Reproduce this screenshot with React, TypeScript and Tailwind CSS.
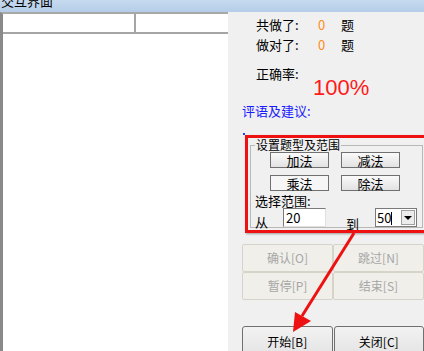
const font = { fontFamily: '"SimSun", "Noto Sans CJK SC", "Liberation Sans", sans-serif' };

function WinButton({ label, pressed }: { label: string; pressed?: boolean }) {
  return (
    <div
      className={`flex h-[16px] w-[59px] shrink-0 items-center justify-center border border-[#707070] text-[13px] leading-none text-black ${
        pressed ? 'bg-[#f6f6f6]' : 'bg-gradient-to-b from-[#fafafa] to-[#e2e2e2]'
      }`}
    >
      {label}
    </div>
  );
}

function DisabledButton({ label }: { label: string }) {
  return (
    <div className="flex h-[28px] items-center justify-center rounded-[2px] border border-[#d6d3c8] bg-[#f0efea] text-[12px] text-[#a6a6a6]">
      {label}
    </div>
  );
}

export default function App() {
  return (
    <div className="relative flex h-[351px] w-[424px] flex-col overflow-hidden bg-[#f0f0f0]" style={font}>
      {/* title bar */}
      <div className="h-[12px] shrink-0 overflow-hidden bg-gradient-to-b from-[#c6daef] to-[#b4cde8]">
        <div className="-mt-[7px] pl-[1px] text-[13px] leading-[15px] text-black">交互界面</div>
      </div>

      <div className="flex flex-1">
        {/* list view */}
        <div className="flex w-[228px] shrink-0 flex-col border-l-[3px] border-t-[2px] border-l-[#8a8a8a] border-t-[#a8a8a8] bg-white">
          <div className="flex h-[20px] border-b-[2px] border-[#a5a5a5]">
            <div className="w-[133px] border-r-[2px] border-[#a5a5a5]" />
            <div className="flex-1" />
          </div>
        </div>

        {/* right panel */}
        <div className="flex min-w-0 flex-1 flex-col text-[13px] text-black">
          <div className="ml-[28px] mt-[5px] flex flex-col gap-[6px]">
            <div className="flex h-[14px] items-center leading-none">
              <span className="w-[62px]">共做了:</span>
              <span className="w-[23px] text-[#ff8c1a]">0</span>
              <span>题</span>
            </div>
            <div className="flex h-[14px] items-center leading-none">
              <span className="w-[62px]">做对了:</span>
              <span className="w-[23px] text-[#ff8c1a]">0</span>
              <span>题</span>
            </div>
          </div>
          <div className="ml-[28px] mt-[16px] h-[14px] leading-none">正确率:</div>
          <div className="ml-[85px] mt-[-4px] h-[22px] text-[22px] leading-none text-[#ff1a1a]" style={{ fontFamily: '"Liberation Sans", sans-serif' }}>
            100%
          </div>
          <div className="ml-[14px] mt-[5px] h-[14px] leading-none text-[#1a1aff]">评语及建议:</div>

          {/* group box */}
          <div className="relative ml-[22px] mr-[1px] mt-[27px] h-[83px] border border-[#b8b8b8] px-[4px] pt-[6px]">
            <span className="absolute -top-[7px] left-[4px] bg-[#f0f0f0] px-[1px] text-[12px] leading-[12px]">设置题型及范围</span>
            <div className="ml-[15px] flex gap-[12px]">
              <WinButton label="加法" />
              <WinButton label="减法" />
            </div>
            <div className="ml-[15px] mt-[7px] flex gap-[12px]">
              <WinButton label="乘法" pressed />
              <WinButton label="除法" />
            </div>
            <div className="mt-[3px] h-[14px] leading-[14px]">选择范围:</div>
            <div className="flex items-end">
              <span className="mb-[-2px] w-[28px] shrink-0 leading-[14px]">从</span>
              <div className="mt-[-6px] h-[19px] w-[43px] shrink-0 border border-[#7a7a7a] border-b-[#e0e0e0] border-r-[#e0e0e0] bg-white pl-[2px] text-[13px] leading-[17px]">
                20
              </div>
              <span className="mb-[-4px] ml-[20px] w-[29px] shrink-0 leading-[14px]">到</span>
              <div className="flex h-[19px] w-[42px] shrink-0 border border-[#7a7a7a] bg-white">
                <div className="flex-1 pl-[1px] leading-[17px]">
                  50<span className="inline-block h-[13px] w-[1px] translate-y-[2px] bg-black" />
                </div>
                <div className="m-[1px] flex w-[14px] items-center justify-center border border-[#a0a0a0] bg-[#ececec]">
                  <div className="h-0 w-0 border-l-[4px] border-r-[4px] border-t-[4px] border-l-transparent border-r-transparent border-t-black" />
                </div>
              </div>
            </div>
          </div>

          <div className="ml-[14px] mt-[16px] grid grid-cols-2" style={{ fontFamily: '"Noto Sans CJK SC", sans-serif' }}>
            <DisabledButton label="确认[O]" />
            <DisabledButton label="跳过[N]" />
            <DisabledButton label="暂停[P]" />
            <DisabledButton label="结束[S]" />
          </div>

          <div className="ml-[14px] mt-[26px] grid grid-cols-2 gap-[1px]">
            <div className="flex h-[30px] items-start justify-center rounded-[3px] border border-[#707070] bg-gradient-to-b from-[#f2f2f2] to-[#e4e4e4] pt-[9px] text-[12px] leading-none">
              开始[B]
            </div>
            <div className="flex h-[30px] items-start justify-center rounded-[3px] border border-[#707070] bg-gradient-to-b from-[#f2f2f2] to-[#e4e4e4] pt-[9px] text-[12px] leading-none">
              关闭[C]
            </div>
          </div>
        </div>
      </div>

      {/* annotation overlay */}
      <div className="pointer-events-none absolute left-[243px] top-[133px] h-[2px] w-[2px] bg-[#2040ff]" />
      <div className="pointer-events-none absolute left-[245px] top-[135px] h-[98px] w-[190px] border-[3px] border-[#ee1111] shadow-[1px_1px_2px_rgba(0,0,0,0.35)]" />
      <svg className="pointer-events-none absolute left-0 top-0" width="424" height="351" viewBox="0 0 424 351">
        <line x1="354" y1="233" x2="302" y2="316" stroke="#ee1111" strokeWidth="3" />
        <polygon points="293,332 295,312 311,321" fill="#ee1111" />
      </svg>
    </div>
  );
}
